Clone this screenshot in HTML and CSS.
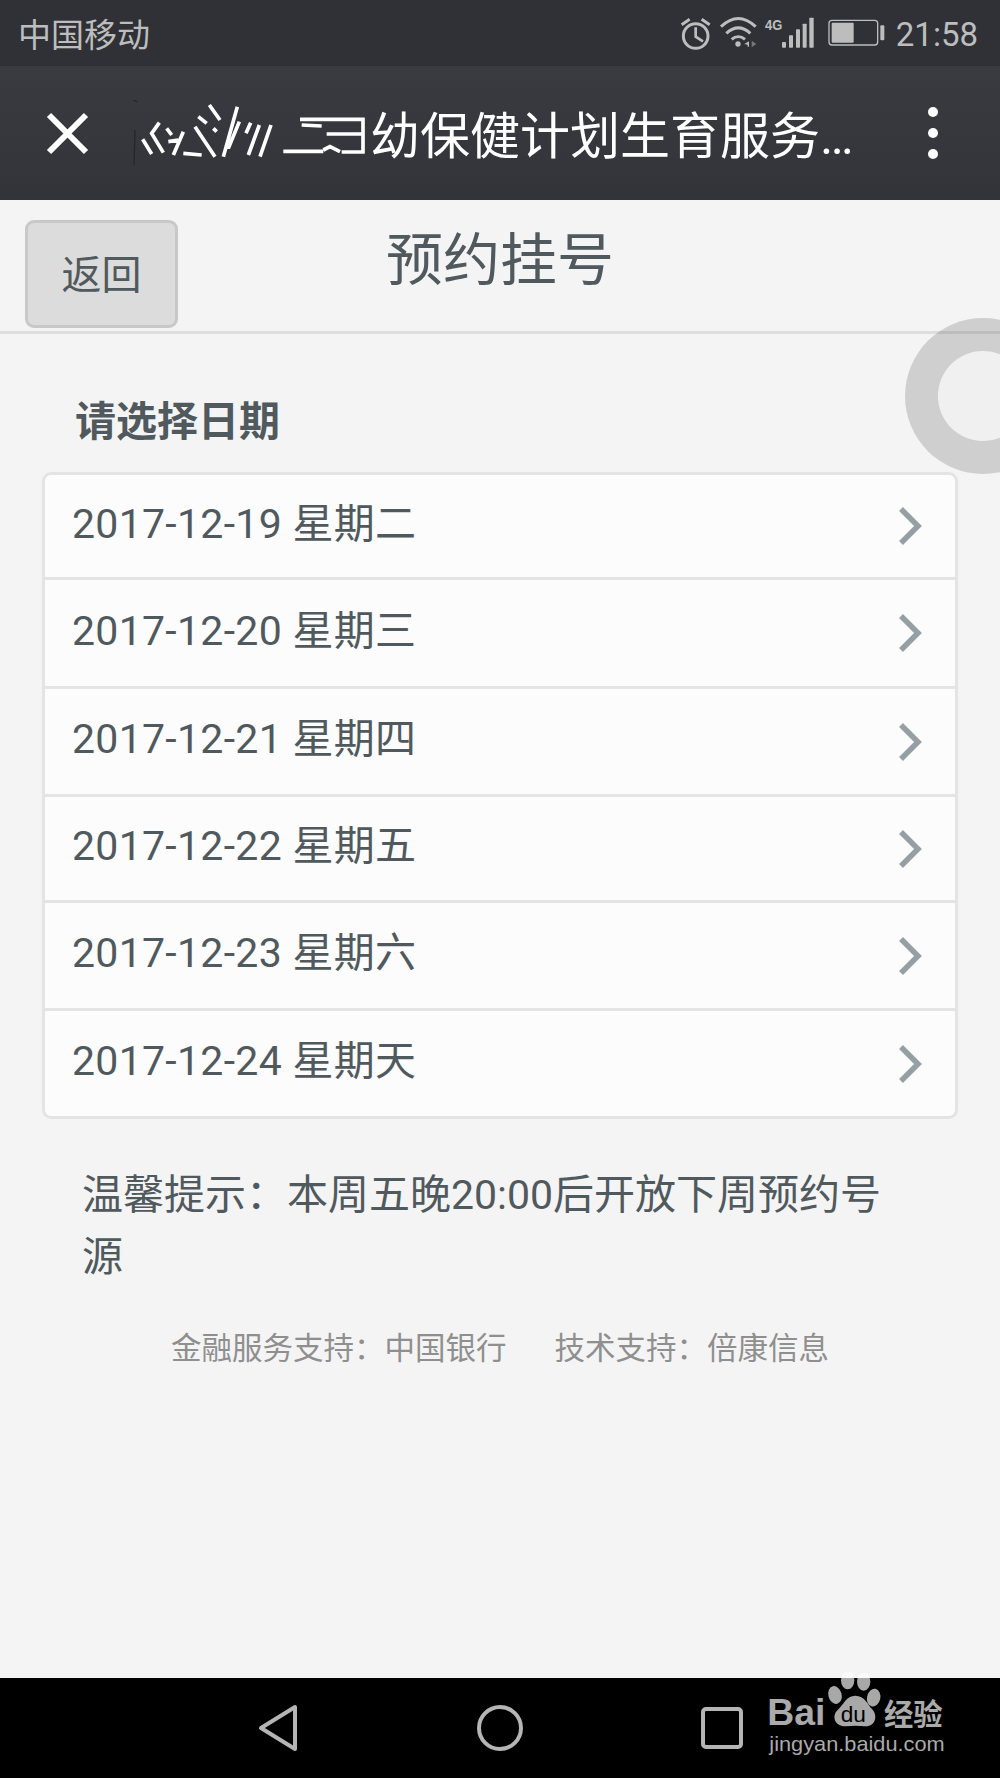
FILE: index.html
```html
<!DOCTYPE html>
<html lang="zh-CN">
<head>
<meta charset="utf-8">
<title>预约挂号</title>
<link rel="stylesheet" href="styles.css">
</head>
<body>
<div class="phone">
  <div class="status-bar">
    <span class="carrier">中国移动</span>
    <div class="status-right">
      <svg class="status-icons" viewBox="0 0 660 150" width="220" height="50">
        <g fill="none" stroke="#bdbdbd" stroke-width="9">
          <circle cx="80" cy="78" r="37"/>
          <path d="M80 52V80L102 94" stroke-width="8"/>
          <path d="M38 44L62 28M122 44L98 28" stroke-width="9"/>
          <path d="M156 50C190 18 226 18 260 50"/>
          <path d="M172 70C196 48 220 48 244 70"/>
          <path d="M188 88C200 78 216 78 228 88"/>
        </g>
        <circle cx="207" cy="102" r="8" fill="#bdbdbd"/>
        <path d="M226 102L240 94V110H236V104Z" fill="#bdbdbd"/>
        <path d="M248 92L262 102L248 112Z" fill="#777"/>
        <text x="288" y="60" textLength="52" lengthAdjust="spacingAndGlyphs" class="net-label">4G</text>
        <g fill="#bdbdbd">
          <rect x="339" y="96" width="12" height="17" rx="3"/>
          <rect x="360" y="76" width="12" height="37" rx="2"/>
          <rect x="381" y="58" width="12" height="55" rx="2"/>
          <rect x="401" y="41" width="12" height="72" rx="2"/>
          <rect x="421" y="23" width="13" height="90" rx="2"/>
          <rect x="488" y="38" width="66" height="60" rx="3"/>
          <rect x="634" y="46" width="12" height="45" rx="3"/>
        </g>
        <rect x="480" y="31" width="146" height="74" rx="9" fill="none" stroke="#bdbdbd" stroke-width="4"/>
      </svg>
      <span class="clock">21:58</span>
    </div>
  </div>

  <div class="title-bar">
    <svg class="close-icon" viewBox="0 0 43 43" width="43" height="43">
      <path d="M3 3L40 40M40 3L3 40" fill="none" stroke="#fff" stroke-width="6"/>
    </svg>
    <svg class="scribble" viewBox="0 0 738 270" width="246" height="90">
      <path class="scribble-dark" d="M45 120L42 225M40 30L52 36"/>
      <path class="scribble-line" d="M68 148L95 192M118 98L95 130L130 188M140 115L155 135M190 125L160 195M145 155L175 150M225 110L285 200M190 190L245 195M268 45L300 90M235 80L260 100M280 115L290 125M352 50L310 200M358 95L325 175M392 98L378 130M418 105L385 195M453 105L420 200M490 184L610 184M540 88L734 88M545 105L605 108M620 132L734 132M610 180L630 170L660 185M665 186L734 186M729 84V190"/>
    </svg>
    <span class="page-name">幼保健计划生育服务…</span>
    <svg class="more-icon" viewBox="0 0 12 52" width="12" height="52">
      <circle cx="6" cy="5" r="5"/>
      <circle cx="6" cy="26" r="5"/>
      <circle cx="6" cy="47" r="5"/>
    </svg>
  </div>

  <main class="content">
    <header class="page-header">
      <button class="back-button" type="button">返回</button>
      <h1 class="page-title">预约挂号</h1>
    </header>

    <h2 class="section-title">请选择日期</h2>

    <ul class="date-list">
      <li class="date-row"><span class="date-text">2017-12-19 星期二</span><svg class="chevron" viewBox="0 0 24 38" width="24" height="38"><path d="M3 2L20 19L3 36"/></svg></li>
      <li class="date-row"><span class="date-text">2017-12-20 星期三</span><svg class="chevron" viewBox="0 0 24 38" width="24" height="38"><path d="M3 2L20 19L3 36"/></svg></li>
      <li class="date-row"><span class="date-text">2017-12-21 星期四</span><svg class="chevron" viewBox="0 0 24 38" width="24" height="38"><path d="M3 2L20 19L3 36"/></svg></li>
      <li class="date-row"><span class="date-text">2017-12-22 星期五</span><svg class="chevron" viewBox="0 0 24 38" width="24" height="38"><path d="M3 2L20 19L3 36"/></svg></li>
      <li class="date-row"><span class="date-text">2017-12-23 星期六</span><svg class="chevron" viewBox="0 0 24 38" width="24" height="38"><path d="M3 2L20 19L3 36"/></svg></li>
      <li class="date-row"><span class="date-text">2017-12-24 星期天</span><svg class="chevron" viewBox="0 0 24 38" width="24" height="38"><path d="M3 2L20 19L3 36"/></svg></li>
    </ul>

    <p class="hint">温馨提示：本周五晚20:00后开放下周预约号源</p>

    <footer class="support">
      <span>金融服务支持：中国银行</span>
      <span>技术支持：倍康信息</span>
    </footer>
  </main>

  <nav class="nav-bar">
    <svg class="nav-icon" viewBox="0 0 42 48" width="42" height="48"><path d="M38 3V45L4 24Z"/></svg>
    <svg class="nav-icon" viewBox="0 0 48 48" width="48" height="48"><circle cx="24" cy="24" r="21"/></svg>
    <svg class="nav-icon" viewBox="0 0 42 42" width="42" height="42"><rect x="2" y="2" width="38" height="38" rx="3"/></svg>
  </nav>

  <div class="ring"></div>

  <svg class="watermark" viewBox="0 0 630 300" width="210" height="100">
    <g class="paw">
      <ellipse cx="293" cy="46" rx="20" ry="27"/>
      <ellipse cx="341" cy="50" rx="20" ry="27"/>
      <ellipse cx="255" cy="90" rx="20" ry="27" transform="rotate(-15 255 90)"/>
      <ellipse cx="371" cy="98" rx="20" ry="27" transform="rotate(12 371 98)"/>
      <path d="M316 92C345 92 352 118 366 132C384 150 378 186 344 184C325 182 308 182 288 184C255 186 244 154 262 136C282 118 288 92 316 92Z"/>
    </g>
    <text x="272" y="172" class="wm-du">du</text>
    <text x="52" y="181" class="wm-bai">Bai</text>
    <text x="402" y="179" class="wm-jy">经验</text>
    <text x="58" y="257" textLength="526" lengthAdjust="spacingAndGlyphs" class="wm-url">jingyan.baidu.com</text>
  </svg>
</div>
</body>
</html>
```

FILE: styles.css
```css
* { box-sizing: border-box; }

html, body {
  margin: 0;
  padding: 0;
  background: #f4f4f4;
}

.phone {
  position: relative;
  width: 1000px;
  height: 1778px;
  display: flex;
  flex-direction: column;
  overflow: hidden;
  font-family: Roboto, "Noto Sans CJK SC", sans-serif;
  color: #50595d;
}

.status-bar {
  height: 66px;
  flex: none;
  display: flex;
  align-items: center;
  justify-content: space-between;
  background: #303136;
  color: #bdbdbd;
  padding: 0 22px 0 18px;
}

.carrier { font-size: 33px; }

.status-right {
  display: flex;
  align-items: center;
  gap: 7px;
}

.status-icons { margin-top: 4px; }

.clock { font-size: 33px; line-height: 1; margin-top: 2px; }

.net-label {
  font-family: "Liberation Sans", sans-serif;
  font-size: 44px;
  font-weight: 700;
  fill: #bdbdbd;
}

.title-bar {
  height: 134px;
  flex: none;
  display: flex;
  align-items: center;
  background: linear-gradient(#3a3b41, #33343a);
  padding-left: 46px;
  color: #fff;
}

.close-icon { flex: none; margin-right: 31px; }

.scribble { flex: none; margin: 4px 4px 0 0; }

.scribble-line {
  fill: none;
  stroke: #fff;
  stroke-width: 11;
}

.scribble-dark {
  fill: none;
  stroke: #25262a;
  stroke-width: 4;
}

.page-name {
  font-size: 50px;
  line-height: 1;
  white-space: nowrap;
  margin-top: 8px;
}

.more-icon {
  flex: none;
  margin-left: auto;
  margin-right: 61px;
  fill: #fff;
}

.content {
  flex: 1;
  display: flex;
  flex-direction: column;
  background: #f4f4f4;
}

.page-header {
  height: 134px;
  flex: none;
  position: relative;
  border-bottom: 3px solid #dedede;
  padding: 20px 0 0 25px;
}

.back-button {
  display: block;
  width: 153px;
  height: 108px;
  padding: 0 0 4px;
  background: #dcdcdc;
  border: 3px solid #c8c8c8;
  border-radius: 9px;
  font: inherit;
  font-size: 40px;
  color: #50595d;
}

.page-title {
  position: absolute;
  left: 0;
  right: 0;
  top: 26px;
  margin: 0;
  text-align: center;
  font-size: 57px;
  line-height: 70px;
  font-weight: 400;
}

.section-title {
  margin: 68px 0 30px 75px;
  font-size: 41px;
  line-height: 40px;
  font-weight: 700;
}

.date-list {
  list-style: none;
  margin: 0 42px 0 42px;
  padding: 0;
  display: grid;
  grid-template-rows: 105px 109px 108px 106px 108px 105px;
  background: #fcfcfc;
  border: 3px solid #e4e4e4;
  border-radius: 9px;
}

.date-row {
  display: flex;
  align-items: center;
  justify-content: space-between;
  padding: 0 33px 0 27px;
  border-bottom: 3px solid #e4e4e4;
}

.date-row:last-child { border-bottom: 0; }

.date-text {
  font-size: 41px;
  line-height: 1;
  letter-spacing: 0.3px;
  margin-top: -4px;
}

.chevron {
  flex: none;
  fill: none;
  stroke: #95a0a5;
  stroke-width: 5.5;
}

.hint {
  margin: 45px 100px 0 82px;
  font-size: 41px;
  line-height: 62px;
}

.support {
  display: flex;
  justify-content: center;
  gap: 48px;
  margin-top: 41px;
  font-size: 30.5px;
  line-height: 40px;
  color: #8f8f8f;
}

.nav-bar {
  height: 100px;
  flex: none;
  position: relative;
  display: grid;
  grid-template-columns: 42px 48px 42px;
  justify-content: start;
  align-items: center;
  column-gap: 177px;
  padding-left: 257px;
  background: #000;
}

.nav-icon {
  fill: none;
  stroke: #b5b5b5;
  stroke-width: 4;
  stroke-linejoin: round;
}

.ring {
  position: absolute;
  left: 905px;
  top: 318px;
  width: 156px;
  height: 156px;
  border: 33px solid rgba(0, 0, 0, 0.15);
  border-radius: 50%;
  background: rgba(0, 0, 0, 0.015);
  background-clip: padding-box;
}

.watermark {
  position: absolute;
  left: 750px;
  top: 1665px;
}

.paw { fill: rgba(255, 255, 255, 0.66); }

.wm-du {
  font-family: "Liberation Sans", sans-serif;
  font-size: 68px;
  font-weight: 400;
  fill: #000;
}

.wm-bai {
  font-family: "Liberation Sans", sans-serif;
  font-size: 112px;
  font-weight: 700;
  fill: #aaa;
}

.wm-jy {
  font-family: "Noto Sans CJK SC", sans-serif;
  font-size: 88px;
  font-weight: 700;
  fill: #aaa;
}

.wm-url {
  font-family: "Liberation Sans", sans-serif;
  font-size: 63px;
  fill: #aaa;
}
```
